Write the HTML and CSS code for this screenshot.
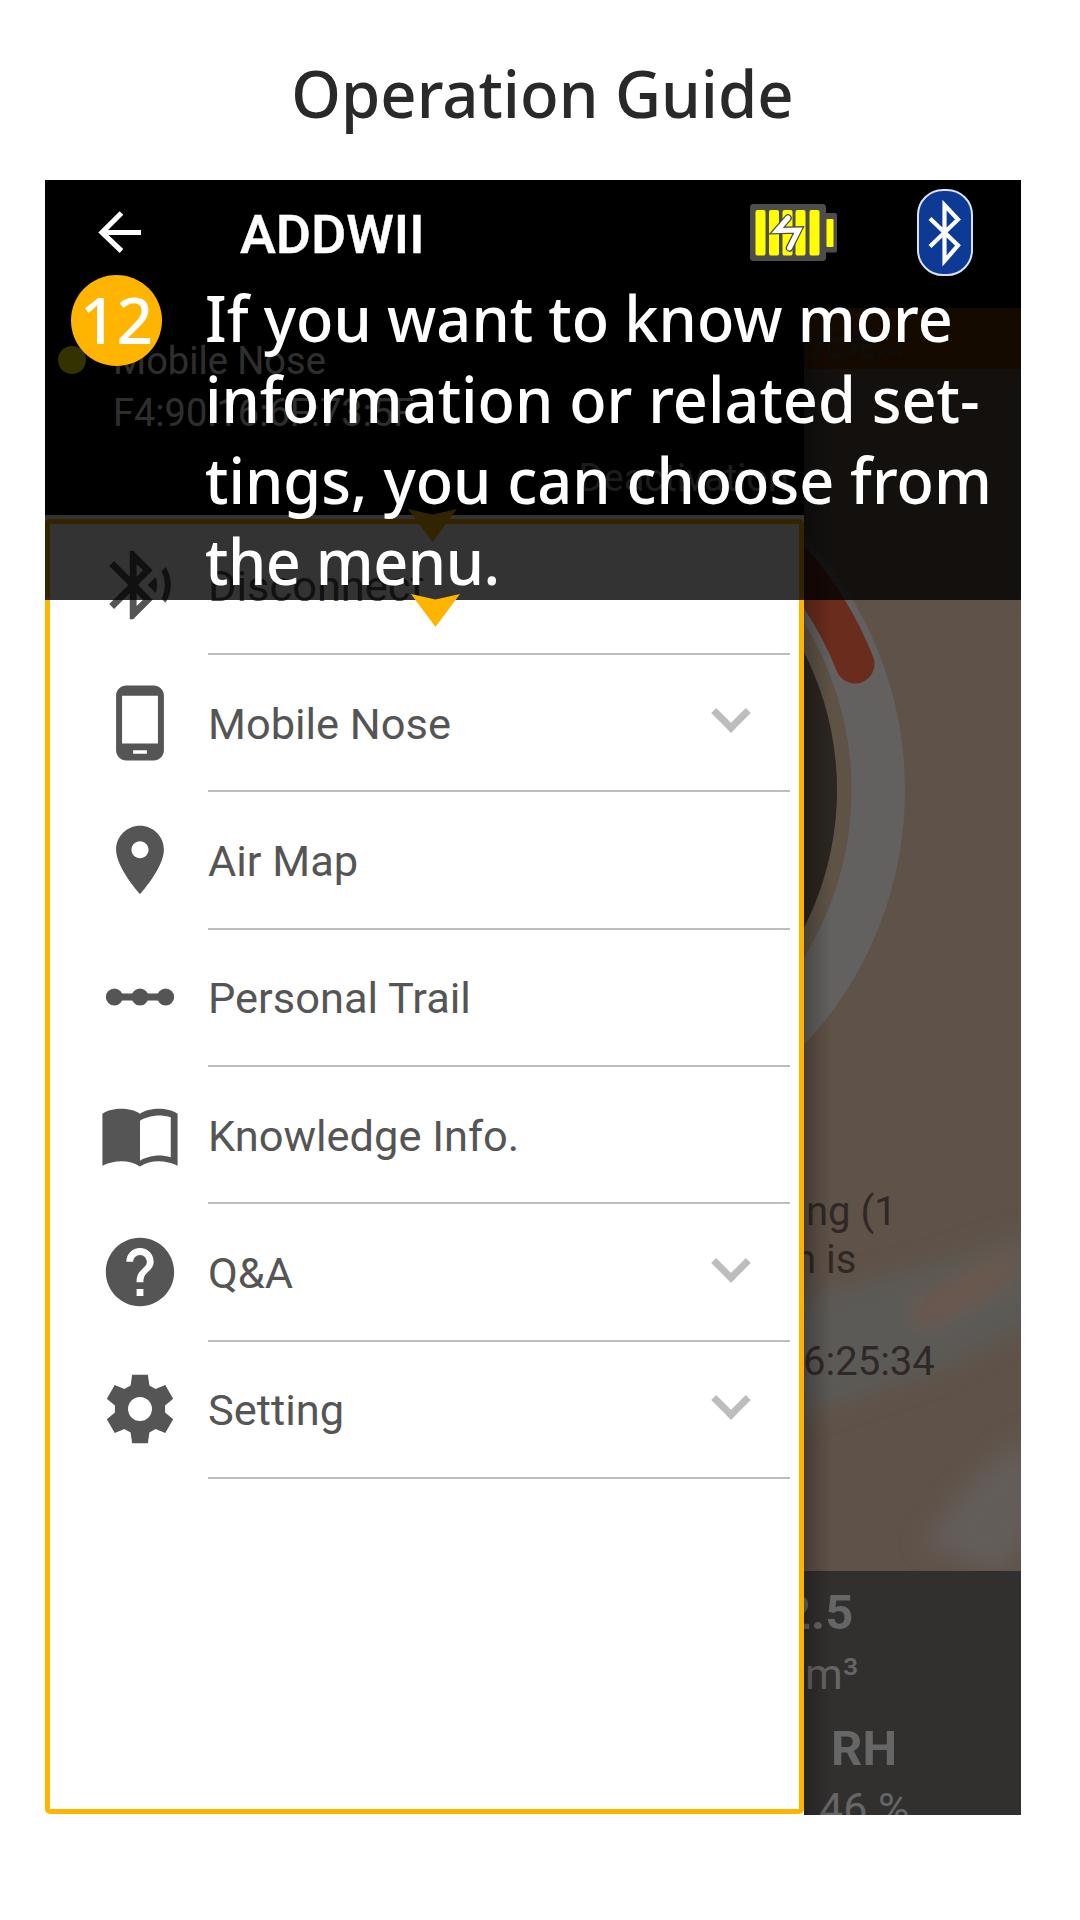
FILE: index.html
```html
<!DOCTYPE html>
<html lang="en">
<head>
<meta charset="utf-8">
<title>Operation Guide</title>
<link rel="stylesheet" href="styles.css">
</head>
<body>
<h1 class="title">Operation Guide</h1>
<main class="phone">
  <header class="toolbar">
    <svg class="back" viewBox="0 0 43 42"><path d="M23.500 2 4 21.500 23.500 40M5 21.500H43" fill="none" stroke="#fff" stroke-width="5.200"/></svg>
    <span class="brand">ADDWII</span>
    <svg class="battery" viewBox="0 0 87 57">
      <rect width="76" height="57" rx="3.500" fill="#4f4c50"/><rect x="72" y="9" width="15" height="39.500" rx="2" fill="#4f4c50"/>
      <g fill="#ff0"><rect x="5.500" y="6" width="10" height="45.500" rx="2"/><rect x="19" y="6" width="10" height="45.500" rx="2"/><rect x="32.500" y="6" width="10" height="45.500" rx="2"/><rect x="45.500" y="6" width="10" height="45.500" rx="2"/><rect x="59.500" y="6" width="10" height="45.500" rx="2"/><rect x="76.500" y="15" width="7" height="28" rx="1"/></g>
      <path d="M38 14 27 26.500 48.500 26 39.500 44" fill="none" stroke="#4f4c50" stroke-width="7.500" stroke-linecap="round"/><path d="M38 14 27 26.500 48.500 26 39.500 44" fill="none" stroke="#fff" stroke-width="5" stroke-linecap="round"/>
    </svg>
    <svg class="bluetooth" viewBox="0 0 56 87"><rect x="1" y="1" width="54" height="85" rx="25" fill="#0c3a94" stroke="#dbe3f2" stroke-width="2"/><path d="M13 29.500 41 56.500 27.500 72V16L41 30.500 13 57.500" fill="none" stroke="#fff" stroke-width="4.200"/></svg>
  </header>
  <div class="body">
    <aside class="drawer">
      <div class="device">
        <i class="status"></i>
        <div class="device-text"><span>Mobile Nose</span><span>F4:90:16:6F:73:5F</span><span class="deactivate">Deactivation</span></div>
      </div>
      <nav class="menu">
        <div class="item"><svg viewBox="0 0 24 24"><path d="M14.240 12.010l2.320 2.320c.28-.72.440-1.510.440-2.330 0-.82-.160-1.590-.430-2.310l-2.330 2.320zm5.290-5.300l-1.260 1.260c.63 1.210.98 2.570.98 4.020s-.360 2.820-.98 4.020l1.200 1.200c.97-1.540 1.540-3.360 1.540-5.310-.010-1.890-.550-3.670-1.480-5.190zm-3.820 1L10 2H9v7.590L4.410 5 3 6.410 8.590 12 3 17.590 4.410 19 9 14.410V22h1l5.710-5.710-4.300-4.290 4.300-4.290zM11 5.830l1.880 1.880L11 9.590V5.830zm1.880 10.460L11 18.170v-3.760l1.880 1.880z"/></svg><span>Disconnect</span></div>
        <div class="item"><svg viewBox="0 0 24 24"><path d="M16 1H8C6.340 1 5 2.340 5 4v16c0 1.660 1.340 3 3 3h8c1.660 0 3-1.340 3-3V4c0-1.660-1.340-3-3-3zm-2 20h-4v-1h4v1zm3.250-3H6.750V4h10.500v14z"/></svg><span>Mobile Nose</span><b class="chev"></b></div>
        <div class="item"><svg viewBox="0 0 24 24"><path d="M12 2C8.130 2 5 5.130 5 9c0 5.250 7 13 7 13s7-7.750 7-13c0-3.870-3.130-7-7-7zm0 9.500c-1.380 0-2.500-1.120-2.500-2.500s1.120-2.500 2.500-2.500 2.500 1.120 2.500 2.500-1.120 2.500-2.500 2.500z"/></svg><span>Air Map</span></div>
        <div class="item"><svg viewBox="0 0 24 24"><path d="M4.500 11h15v2h-15z"/><circle cx="4.500" cy="12" r="2.500"/><circle cx="12" cy="12" r="2.500"/><circle cx="19.500" cy="12" r="2.500"/></svg><span>Personal Trail</span></div>
        <div class="item"><svg viewBox="0 -0.7 24 24"><path d="M12 5.100C10.550 4 8.450 3.600 6.500 3.600S2.450 4 1 5.100V20.300C2.600 19.500 4.700 19 6.500 19c1.950 0 4.050.5 5.500 1.500 1.450-1 3.550-1.500 5.500-1.500 1.800 0 3.900.5 5.500 1.300V5.100C21.550 4 19.450 3.600 17.500 3.600S13.450 4 12 5.100zM21 17.800c-1.100-.350-2.300-.5-3.500-.5-1.700 0-4.150.650-5.500 1.500V7.100c1.350-.850 3.800-1.500 5.500-1.500 1.200 0 2.400.150 3.500.5z"/></svg><span>Knowledge Info.</span></div>
        <div class="item"><svg viewBox="0 0 24 24"><path d="M12 2C6.480 2 2 6.480 2 12s4.480 10 10 10 10-4.480 10-10S17.520 2 12 2zm1 17h-2v-2h2v2zm2.070-7.750l-.9.920C13.450 12.900 13 13.500 13 15h-2v-.5c0-1.100.450-2.100 1.170-2.830l1.240-1.260c.370-.360.590-.860.590-1.410 0-1.100-.9-2-2-2s-2 .9-2 2H8c0-2.210 1.790-4 4-4s4 1.790 4 4c0 .880-.360 1.680-.930 2.250z"/></svg><span>Q&amp;A</span><b class="chev"></b></div>
        <div class="item"><svg viewBox="0 0 24 24"><path fill-rule="evenodd" d="M9.700 2h4.600l.45 3.100 1.800 1.050L19.400 5l2.300 4-2.350 1.950v2.100L21.700 15l-2.300 4-2.850-1.150-1.800 1.050L14.300 22H9.700l-.450-3.100-1.800-1.050L4.600 19l-2.300-4 2.350-1.950v-2.100L2.300 9l2.300-4 2.850 1.150 1.800-1.050zM12 8.500a3.500 3.500 0 1 0 0 7 3.500 3.500 0 1 0 0-7z"/></svg><span>Setting</span><b class="chev"></b></div>
      </nav>
    </aside>
    <section class="scene">
      <svg class="gauge" viewBox="804 279 217 1292">
        <defs><filter id="soft" x="-50%" y="-50%" width="200%" height="200%"><feGaussianBlur stdDeviation="13"/></filter></defs>
        <g filter="url(#soft)"><path d="M790 1300 930 1265 1040 1230V1320L940 1370 790 1420z" fill="#5c5a57"/><path d="M905 1312 960 1280 1035 1240 1000 1285 930 1325z" fill="#70594a"/><path d="M920 1545 980 1470 1035 1430V1530L1000 1575z" fill="#635d5a"/></g>
        <circle cx="533" cy="790" r="345" fill="none" stroke="#636160" stroke-width="54"/>
        <circle cx="533" cy="790" r="311" fill="none" stroke="#5f5346" stroke-width="15"/>
        <circle cx="533" cy="790" r="304" fill="#2b2620"/>
        <path d="M683 479A345 345 0 0 1 855 664" fill="none" stroke="#6a2c1d" stroke-width="39" stroke-linecap="round"/>
      </svg>
      <div class="ticker"><span>次元尧...</span></div>
      <div class="notice"><span>ng (1</span><span class="second">n is</span></div>
      <div class="time">6:25:34</div>
      <div class="stats"><b class="pm">2.5</b><span class="unit">m³</span><b class="rh">RH</b><span class="pct">46 %</span></div>
    </section>
  </div>
  <svg class="pointer under" viewBox="0 0 49 33"><path d="M0 0 24.500 5.500 49 0 24.500 33z"/></svg>
  <section class="callout">
    <div class="num">12</div>
    <p><span class="first">If you want to know more</span><span>information or related set-</span><span>tings, you can choose from</span><span class="last">the menu.</span></p>
  </section>
  <svg class="pointer over" viewBox="0 0 49 33"><path d="M0 0 24.500 5.500 49 0 24.500 33z"/></svg>
</main>
</body>
</html>
```
FILE: styles.css
```css
* { box-sizing: border-box; }
body { margin: 0; width: 1080px; height: 1920px; background: #fff; font-family: Roboto, sans-serif; overflow: hidden; }
.title { margin: 0; height: 180px; padding: 48px 0 0 5px; text-align: center; font: 500 65px/90px "Noto Sans", "Open Sans", sans-serif; color: #292929; white-space: nowrap; transform: scaleX(.976); }
.phone { position: relative; width: 976px; height: 1635px; margin-left: 45px; background: #000; overflow: hidden; display: flex; flex-direction: column; }
.toolbar { height: 99px; flex: none; display: flex; align-items: flex-start; color: #fff; }
.back { width: 43px; height: 42px; margin: 31px 0 0 53px; }
.brand { width: 509px; margin: 24px 0 0 99px; font-size: 54px; line-height: 62px; font-weight: 500; -webkit-text-stroke: .5px #fff; }
.battery { width: 87px; height: 57px; margin: 24px 0 0 1px; }
.bluetooth { width: 56px; height: 87px; margin: 9px 0 0 80px; }
.body { flex: 1; display: flex; min-height: 0; }
.drawer { width: 759px; flex: none; display: flex; flex-direction: column; background: #fff; }
.device { height: 236px; flex: none; background: #000; display: flex; color: #e6e6e6; font-size: 38px; }
.status { width: 28px; height: 28px; margin: 67px 0 0 13px; border-radius: 50%; background: #ff0; }
.device-text { flex: 1; margin-left: 27px; padding: 56px 15px 0 0; display: flex; flex-direction: column; line-height: 52px; }
.deactivate { align-self: flex-end; padding-top: 13px; color: #8c8c8c; }
.menu { flex: 1; margin: 4px 0 1px; border: 5px solid #ffb400; border-radius: 5px; padding-left: 49px; }
.item { height: 137.350px; margin-right: 9px; display: flex; align-items: center; color: #555; font-size: 43.400px; position: relative; }
.item:first-child { height: 131px; padding-bottom: 7px; }
.item span { padding-top: 1px; }
.item::after { content: ""; position: absolute; left: 109px; right: 0; bottom: 0; height: 2px; background: #bdbdbd; }
.item svg { width: 82px; height: 82px; margin: -2px 27px 0 0; fill: #555; flex: none; }
.chev { width: 28px; height: 28px; margin: -21px 45px 0 auto; border: solid #bdbdbd; border-width: 0 7px 7px 0; transform: rotate(45deg); }
.scene { flex: 1; position: relative; overflow: hidden; background: #5f5248; display: flex; flex-direction: column; color: #302826; white-space: nowrap; }
.gauge { position: absolute; inset: 0; width: 217px; height: 1292px; }
.scene::after { content: ""; position: absolute; inset: 0 auto 0 0; width: 28px; background: linear-gradient(90deg, rgba(0,0,0,.25), transparent); }
.scene > div { position: relative; }
.ticker { height: 90px; flex: none; border-top: 29px solid #000; background: #6b3600; color: #3c4a4a; font: 34px/66px "Noto Sans CJK SC", sans-serif; }
.ticker span { margin-left: -29px; }
.notice { margin-top: 819px; padding-left: 2px; display: flex; flex-direction: column; font-size: 40px; line-height: 48px; height: 102px; }
.second { margin-left: -12px; }
.time { margin-top: 47px; margin-left: -1px; height: 50px; font-size: 40px; line-height: 50px; }
.stats { margin-top: auto; height: 244px; flex: none; overflow: hidden; background: #32302f; color: #666; display: flex; flex-direction: column; }
.pm { margin: 13px 0 0 -21px; font-size: 49px; line-height: 58px; }
.unit { margin-left: 1px; font-size: 43px; line-height: 60px; margin-top: 2px; }
.rh { margin: 16px 0 0 27px; font-size: 49px; line-height: 58px; }
.pct { margin: 1px 0 0 15px; font-size: 43px; line-height: 58px; }
.callout { position: absolute; inset: 99px 0 auto 0; height: 321px; background: rgba(0,0,0,.8); display: flex; color: #fff; font-family: "Noto Sans", "Open Sans", sans-serif; font-weight: 500; }
.num { width: 91px; height: 91px; margin: -4px 0 0 26px; flex: none; border-radius: 50%; background: #ffb400; text-align: center; font-size: 64px; line-height: 90px; }
.callout p { margin: -2px 0 0 43px; display: flex; flex-direction: column; align-items: flex-start; font-size: 64px; line-height: 81px; white-space: nowrap; transform: scaleX(.955); transform-origin: 0 0; }
.first { letter-spacing: .1px; word-spacing: -1px; }
.last { letter-spacing: -.5px; }
.pointer { position: absolute; width: 49px; height: 33px; fill: #ffb400; }
.under { left: 363px; top: 329px; }
.over { left: 366px; top: 414px; }
```
